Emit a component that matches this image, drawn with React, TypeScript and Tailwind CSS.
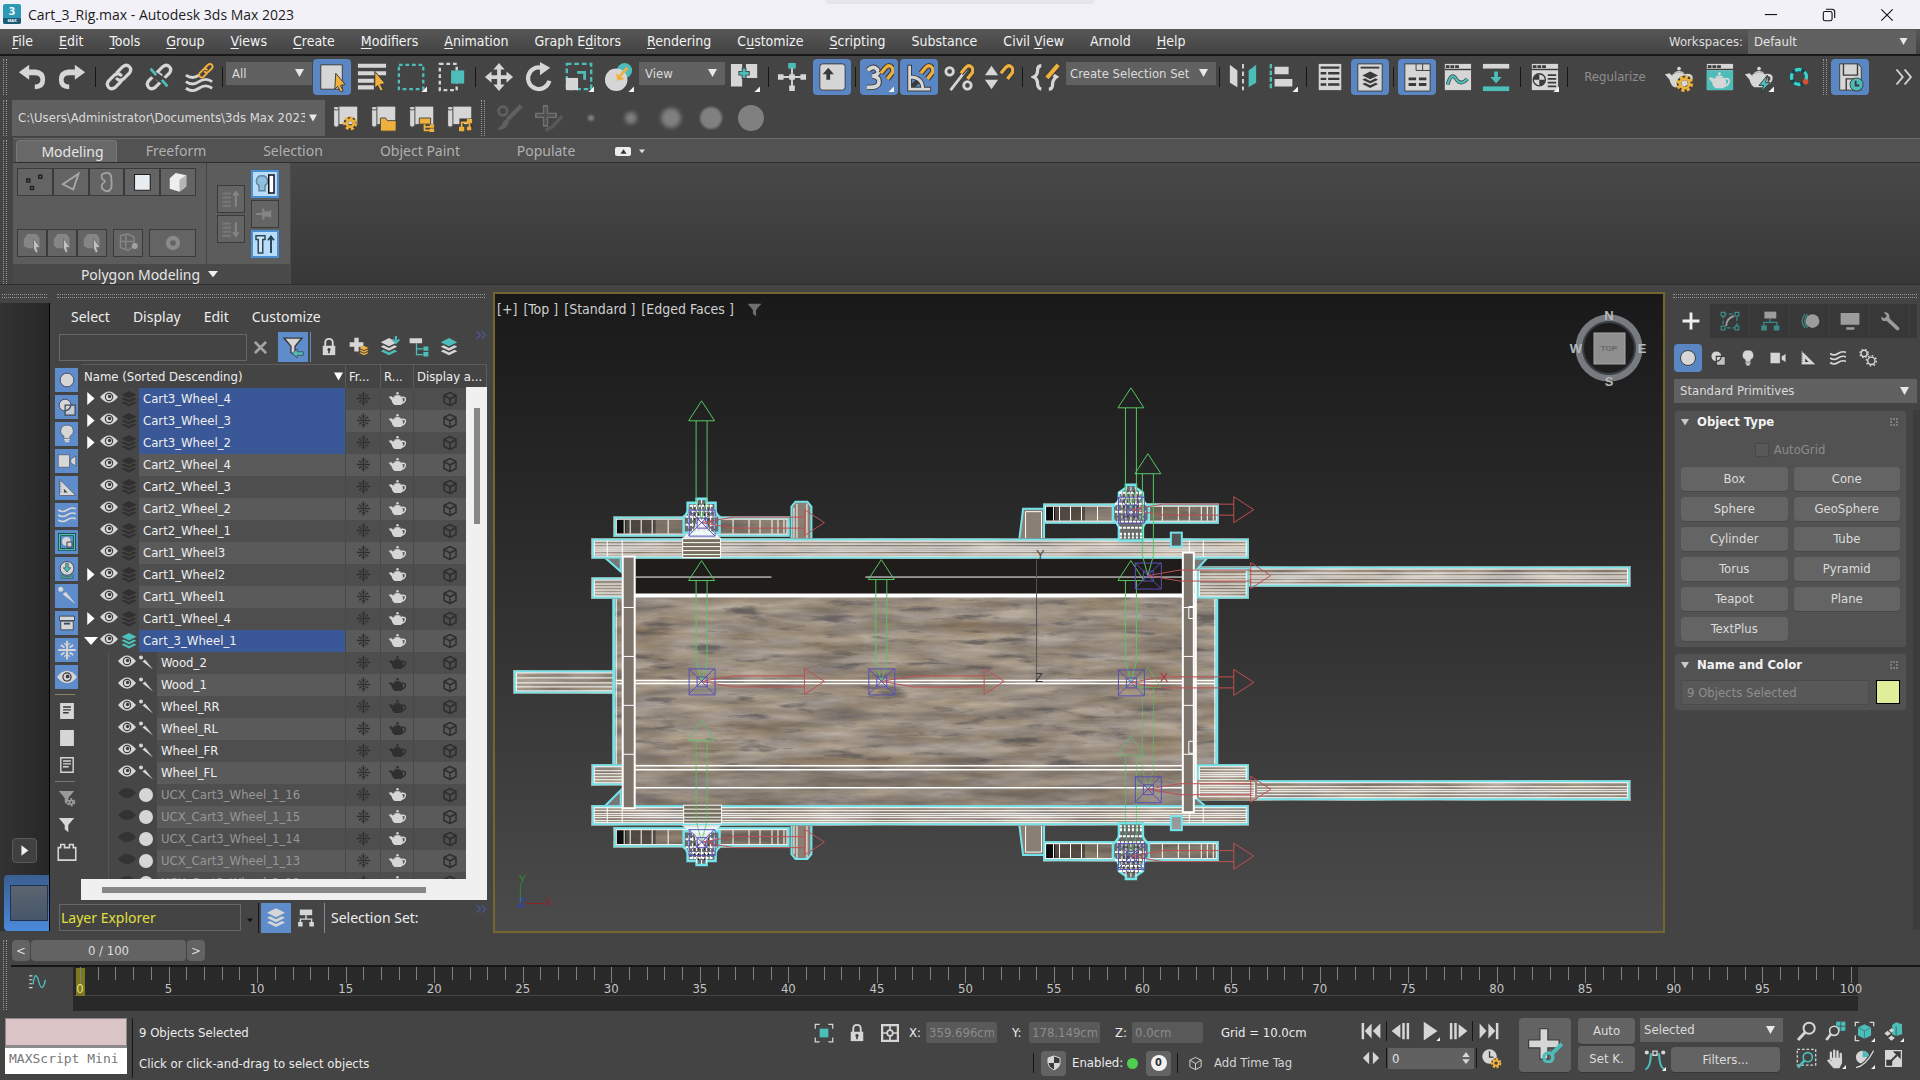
import React from "react";

const G = "#d6d6d6";
const T = "#4dbdb9";
const Y = "#efb13e";
const D = "#3a3a3a";
const UI = "font-['DejaVu_Sans_Condensed','DejaVu_Sans',sans-serif]";

type Kids = { children?: React.ReactNode };

function Svg({ s = 32, className = "", children }: Kids & { s?: number; className?: string }) {
  return (
    <svg width={s} height={s} viewBox="0 0 32 32" fill="none" className={"shrink-0 " + className} aria-hidden="true">
      {children}
    </svg>
  );
}

/* ---------- shared glyphs, all drawn on a 32 unit grid ---------- */

const Corner = () => <path d="M32 26v6h-6z" fill="#f2f2f2" />;

const Teapot = ({ c = G }: { c?: string }) => (
  <g>
    <path d="M9 13q7-3 14 0q5 7-1 14H11q-4-2-5-8L1 13l5-1l3 3z" fill={c} />
    <path d="M10 11.500q6-4 12 0z" fill={c} />
    <circle cx="16" cy="7" r="2" fill={c} />
    <path d="M23 14q8-1 6 5q-2 5-7 5" stroke={c} strokeWidth="2.500" />
  </g>
);

const Gear = ({ x, y, r = 6, c = Y }: { x: number; y: number; r?: number; c?: string }) => (
  <g>
    <circle cx={x} cy={y} r={r} stroke={D} strokeWidth="5" />
    <circle cx={x} cy={y} r={r + 1.500} stroke={c} strokeWidth="3" strokeDasharray="3.500 2.400" />
    <circle cx={x} cy={y} r={r - 1} stroke={c} strokeWidth="3" />
  </g>
);

const Magnet = () => (
  <g>
    <path d="M18 12l5-6q4-4 7 0q2 4-1 7l-4 5" stroke={D} strokeWidth="6" />
    <path d="M18 12l5-6q4-4 7 0q2 4-1 7l-4 5" stroke={Y} strokeWidth="3.500" />
  </g>
);

const Layers = ({ a = G, b = G, c = G }: { a?: string; b?: string; c?: string }) => (
  <g>
    <path d="M4 22l12 6l12-6l-4-2l-8 4l-8-4z" fill={c} />
    <path d="M4 15.500l12 6l12-6l-4-2l-8 4l-8-4z" fill={b} />
    <path d="M4 9l12 6l12-6l-12-6z" fill={a} />
  </g>
);

const Eye = ({ closed = false }: { closed?: boolean }) =>
  closed ? (
    <path d="M0 16q16-18 32 0q-16 18-32 0z" fill="#333" />
  ) : (
    <g>
      <path d="M0 16q16-20 32 0q-16 20-32 0z" fill={G} />
      <circle cx="16" cy="16" r="7.500" fill={D} />
      <circle cx="16" cy="16" r="5.500" fill={G} />
      <circle cx="17" cy="15" r="3" fill={D} />
    </g>
  );

const Funnel = ({ c = G }: { c?: string }) => <path d="M3 5h26l-10 12v12l-6-5v-7z" fill={c} />;

const Scroll = () => (
  <g>
    <path d="M8 3h22v20H8z" fill={G} />
    <path d="M3 3h6v22q-3 3-6 0z" fill={G} stroke={D} />
    <path d="M3 6q3 2 6 0" stroke={D} />
  </g>
);

const Snow = ({ c = "#303030" }: { c?: string }) => (
  <g stroke={c} strokeWidth="3">
    <path d="M16 1v30M2 16h28M6 8l6 4M26 8l-6 4M6 24l6-4M26 24l-6-4" />
    <path d="M11 5l5 4l5-4M11 27l5-4l5 4" strokeWidth="2" />
  </g>
);

const Cube = ({ c = "#2e2e2e" }: { c?: string }) => (
  <path d="M16 3l12 6v14l-12 6l-12-6V9zM4 9l12 7l12-7M16 16v13" stroke={c} strokeWidth="3" strokeLinejoin="round" />
);

const Bulb = ({ k = D }: { k?: string }) => (
  <g>
    <path d="M16 2a9 9 0 0 1 5 17v4H11v-4A9 9 0 0 1 16 2z" fill={G} stroke={k} />
    <path d="M11.500 25h9M13 28h6" stroke={G} strokeWidth="2.500" />
  </g>
);

const Camera = ({ k = D }: { k?: string }) => (
  <g fill={G} stroke={k}>
    <path d="M2 6h18v20H2z" />
    <path d="M22 13l8-5v16l-8-5z" />
  </g>
);

const SetSquare = ({ k = D }: { k?: string }) => (
  <g>
    <path d="M4 2l26 26H4z" fill={G} stroke={k} />
    <path d="M11 17l6 6h-6z" fill={k} />
    <path d="M4 6h3M4 10h3M4 14h3M4 18h3M4 22h3" stroke={k} />
  </g>
);

const Waves = ({ w = 2.500 }: { w?: number }) => (
  <g stroke={G} strokeWidth={w}>
    <path d="M2 8q7 5 14 0t14-2M2 16q7 5 14 0t14-2M2 24q7 5 14 0t14-2" />
  </g>
);

const Shapes = ({ k = D }: { k?: string }) => (
  <g>
    <circle cx="13" cy="13" r="9.500" fill={G} stroke={k} strokeWidth="1.500" />
    <path d="M13 13h16v16H13z" fill={G} fillOpacity=".85" stroke={k} strokeWidth="2" />
    <path d="M22 13q-1 8-9 9" stroke={k} strokeWidth="2" />
  </g>
);

const Bone = () => (
  <g>
    <circle cx="6" cy="5" r="4" fill={G} />
    <path d="M9 13l5-4l16 20z" fill={G} />
  </g>
);

const Chain = ({ c = G }: { c?: string }) => (
  <g stroke={c} strokeWidth="3.500" strokeLinecap="round">
    <path d="M14 11l6-6q4-3 7 0t0 7l-6 6q-4 3-7 0" />
    <path d="M18 21l-6 6q-4 3-7 0t0-7l6-6q4-3 7 0" />
  </g>
);

const Lock = () => (
  <g>
    <path d="M10 15V9q0-6 6-6t6 6v6" stroke={G} strokeWidth="3" />
    <path d="M6 14h20v15H6z" fill={G} />
    <circle cx="16" cy="20" r="2.500" fill={D} />
    <path d="M16 20v6" stroke={D} strokeWidth="2.500" />
  </g>
);

const Win = () => (
  <g>
    <path d="M3 2h28v28H3z" fill={G} />
    <path d="M3 8h28" stroke={D} strokeWidth="1.500" />
    <path d="M4 5h14" stroke={D} strokeWidth="3" strokeDasharray="4 1" />
  </g>
);

/* ---------- small building blocks ---------- */

function Tool({ label, on = false, children }: Kids & { label: string; on?: boolean }) {
  return (
    <button aria-label={label} className="flex h-9 w-10 shrink-0 items-center justify-center">
      <span className={on ? "flex h-9 w-[38px] items-center justify-center rounded bg-[#5b86c4]" : "flex"}>
        <Svg s={30}>{children}</Svg>
      </span>
    </button>
  );
}

const Sep = () => (
  <div className="flex w-[7px] shrink-0 justify-center">
    <div className="h-5 w-px bg-[#161616]" />
  </div>
);

function Drop({ label, value, box, text = "text-[13px]" }: { label: string; value: string; box: string; text?: string }) {
  return (
    <div className={"relative shrink-0 " + box}>
      <select aria-label={label} className={"h-full w-full appearance-none overflow-hidden bg-[#616161] text-[#dcdcdc] outline-none " + text}>
        <option>{value}</option>
      </select>
      <svg width="9" height="8" viewBox="0 0 9 8" className="pointer-events-none absolute top-1/2 right-2 -translate-y-1/2" aria-hidden="true">
        <path d="M0 0h9L4.500 8z" fill="#e8e8e8" />
      </svg>
    </div>
  );
}

const GripV = ({ className = "" }: { className?: string }) => (
  <div className={"w-1 shrink-0 border-x border-dotted border-[#989898] " + className} />
);
const GripH = ({ className = "" }: { className?: string }) => (
  <div className={"h-1 shrink-0 border-y border-dotted border-[#989898] " + className} />
);

/* ---------- title and menu ---------- */

function TitleBar() {
  return (
    <header className="relative flex h-[29px] shrink-0 items-center bg-[#f3f1f8] font-['Open_Sans',sans-serif] text-[14px] text-[#1c1c1c]">
      <svg width="19" height="21" viewBox="0 0 19 21" className="mr-1.5 ml-[3px]" aria-hidden="true">
        <rect width="18" height="20" rx="2" fill="#2d9ab5" />
        <path d="M0 14h18v4q0 2-2 2H2q-2 0-2-2z" fill="#1b5a72" />
        <text x="9" y="11" textAnchor="middle" fontSize="11" fontWeight="bold" fontFamily="Open Sans, sans-serif" fill="#fff">3</text>
        <text x="9" y="18" textAnchor="middle" fontSize="4" fontWeight="bold" fontFamily="Open Sans, sans-serif" fill="#fff">MAX</text>
      </svg>
      <h1>Cart_3_Rig.max - Autodesk 3ds Max 2023</h1>
      <div className="absolute top-0 left-1/2 h-1 w-[270px] -translate-x-1/2 rounded-b bg-[#e6e4ec]" />
      <div className="mr-1 ml-auto flex">
        <button aria-label="Minimize" className="flex w-[58px] justify-center">
          <Svg s={14}><path d="M2 15h28" stroke="#111" strokeWidth="2.500" /></Svg>
        </button>
        <button aria-label="Restore" className="flex w-[58px] justify-center">
          <Svg s={14}>
            <rect x="3" y="8" width="20" height="21" rx="4" stroke="#111" strokeWidth="2.500" />
            <path d="M9 3h14q6 0 6 6v14" stroke="#111" strokeWidth="2.500" />
          </Svg>
        </button>
        <button aria-label="Close" className="flex w-[58px] justify-center">
          <Svg s={14}><path d="M3 3l26 26M29 3L3 29" stroke="#111" strokeWidth="2.500" /></Svg>
        </button>
      </div>
    </header>
  );
}

const MENUS: [string, string, string][] = [
  ["", "F", "ile"], ["", "E", "dit"], ["", "T", "ools"], ["", "G", "roup"], ["", "V", "iews"], ["", "C", "reate"],
  ["", "M", "odifiers"], ["", "A", "nimation"], ["Graph E", "d", "itors"], ["", "R", "endering"], ["C", "u", "stomize"],
  ["", "S", "cripting"], ["Substance", "", ""], ["Civil ", "V", "iew"], ["Arnold", "", ""], ["", "H", "elp"],
];

function MenuBar() {
  return (
    <nav className={"flex h-[27px] shrink-0 items-center border-b-2 border-[#191919] bg-gradient-to-b from-[#575757] to-[#434343] pr-1 pl-3 text-[14px] text-[#f2f2f2] " + UI}>
      <div className="flex gap-[26px]">
        {MENUS.map(([a, b, c]) => (
          <button key={a + b + c} className="whitespace-pre">
            {a}<span className="underline underline-offset-2">{b}</span>{c}
          </button>
        ))}
      </div>
      <label htmlFor="ws" className="mr-[5px] ml-auto text-[13px] text-[#dedede]">Workspaces:</label>
      <div className="relative h-6 w-[168px]">
        <select id="ws" className="h-full w-full appearance-none bg-[#616161] pl-1.5 text-[13px] text-[#e6e6e6]"><option>Default</option></select>
        <svg width="9" height="7" viewBox="0 0 9 8" className="pointer-events-none absolute top-2 right-2" aria-hidden="true"><path d="M0 0h9L4.500 8z" fill="#e8e8e8" /></svg>
      </div>
    </nav>
  );
}

/* ---------- toolbars ---------- */

function MainToolbar() {
  return (
    <div className={"flex h-[42px] shrink-0 items-center pl-[3px] " + UI}>
      <GripV className="mr-[5px] h-9" />
      <Tool label="Undo"><path d="M2 11l11-8v5h7q10 1 10 11t-11 10v-5q6 0 6-5t-6-5h-6v5z" fill={G} /></Tool>
      <Tool label="Redo"><path d="M30 11l-11-8v5h-7q-10 1-10 11t11 10v-5q-6 0-6-5t6-5h6v5z" fill={G} /></Tool>
      <Sep />
      <Tool label="Link"><Chain /></Tool>
      <Tool label="Unlink">
        <Chain />
        <path d="M6 10l20 14" stroke="#444" strokeWidth="7" />
        <path d="M7 7l6 7M19 19l6 7" stroke={T} strokeWidth="3" />
      </Tool>
      <Tool label="Bind to Space Warp">
        <path d="M2 14q7 5 14 0M2 21q7 5 14 0t14 0M2 28q7 5 14 0t14 0" stroke={G} strokeWidth="3" />
        <g transform="translate(14 0) scale(.58)"><Chain c={Y} /></g>
      </Tool>
      <Sep />
      <Drop label="Selection filter" value="All" box="h-[23px] w-[86px] self-start mt-[5px]" text="pl-1.5 text-[13px]" />
      <Tool label="Select Object" on>
        <path d="M4 3h23v26H4z" fill={G} stroke={D} />
        <path d="M20 12l10 12l-5 1l3 6l-3 1l-3-6l-3 3z" fill={Y} stroke={D} />
      </Tool>
      <Tool label="Select by Name">
        <path d="M1 4h30M1 12h30M1 20h17M1 27h17" stroke={G} strokeWidth="4.500" />
        <path d="M19 10l11 13l-5 1l3 6l-3 1l-3-6l-3 3z" fill={Y} stroke={D} />
      </Tool>
      <Tool label="Rectangular Region">
        <path d="M2 3h26v26H2z" stroke={T} strokeWidth="2.500" strokeDasharray="4 3" /><Corner />
      </Tool>
      <Tool label="Window Crossing">
        <path d="M3 2h18v28H3z" stroke={G} strokeWidth="2.500" strokeDasharray="4 3" />
        <path d="M15 9h14v14H15z" fill={T} />
      </Tool>
      <Sep />
      <Tool label="Move"><path d="M16 1l6 7h-4v6h6v-4l7 6l-7 6v-4h-6v6h4l-6 7l-6-7h4v-6H8v4l-7-6l7-6v4h6V8h-4z" fill={G} /></Tool>
      <Tool label="Rotate">
        <path d="M18 6a11.500 11.500 0 1 0 9 14" stroke={G} strokeWidth="4.500" />
        <path d="M17 0l11 6l-11 8z" fill={G} />
      </Tool>
      <Tool label="Scale">
        <path d="M3 2h26v27H3z" stroke={T} strokeWidth="2.500" strokeDasharray="5 3" />
        <path d="M2 17h13v13H2z" fill={G} /><path d="M14 11h8v8" stroke={T} strokeWidth="3" /><Corner />
      </Tool>
      <Tool label="Place">
        <circle cx="22" cy="9" r="8" fill={T} /><circle cx="13" cy="19" r="12" fill={G} />
        <path d="M25 6l-8 9" stroke={Y} strokeWidth="3" /><path d="M13 12l1 8l8-2z" fill={Y} /><Corner />
      </Tool>
      <Drop label="Reference coordinate system" value="View" box="h-[23px] w-[86px] self-start mt-[5px]" text="pl-1.5 text-[13px]" />
      <Tool label="Use Pivot Point Center">
        <path d="M1 2h12v24H1zM17 2h12v15H17z" fill={G} /><path d="M9 12h12M15 6v12" stroke={D} strokeWidth="5" /><path d="M10 12h10M15 7v10" stroke={T} strokeWidth="3" /><Corner />
      </Tool>
      <Sep />
      <Tool label="Select and Manipulate">
        <path d="M16 4v24M4 16h24" stroke={G} strokeWidth="2" />
        <path d="M1 13h6v6H1zM25 13h6v6h-6zM13 25h6v6h-6zM13 13h6v6h-6z" fill={G} /><path d="M12 1h8v6h-8z" fill={T} />
      </Tool>
      <Tool label="Keyboard Shortcut Override" on>
        <rect x="3" y="2" width="27" height="28" rx="3" fill={G} stroke={D} /><path d="M12 6l6 7h-4v6h-4v-6H6z" fill={D} />
      </Tool>
      <Sep />
      <Tool label="Snaps Toggle" on>
        <path d="M4 9q6-6 10-1t-5 7q8 1 7 7t-13 5" stroke={D} strokeWidth="6" />
        <path d="M4 9q6-6 10-1t-5 7q8 1 7 7t-13 5" stroke={G} strokeWidth="4" />
        <Magnet /><Corner />
      </Tool>
      <Tool label="Angle Snap" on>
        <path d="M6 3v26h23M6 16q14 0 14 13M15 20l-9 9" stroke={D} strokeWidth="5" />
        <path d="M6 4v25h22M6 16q14 0 14 13" stroke={G} strokeWidth="3" /><Magnet />
      </Tool>
      <Tool label="Percent Snap">
        <path d="M24 8L7 30" stroke={G} strokeWidth="3" /><circle cx="6" cy="10" r="4" stroke={G} strokeWidth="3" />
        <circle cx="25" cy="25" r="4" stroke={G} strokeWidth="3" /><Magnet />
      </Tool>
      <Tool label="Spinner Snap"><path d="M1 14l7-10l7 10zM1 19l7 10l7-10z" fill={G} /><Magnet /></Tool>
      <Sep />
      <Tool label="Edit Named Selection Sets">
        <path d="M11 4Q7 4 7 9t-4 7q4 2 4 7t4 6M19 29q4 0 4-5t4-8q-4-2-4-5" stroke={G} strokeWidth="3.500" />
        <path d="M17 17L29 3" stroke={D} strokeWidth="7" /><path d="M17 17L29 3" stroke={Y} strokeWidth="4.500" />
      </Tool>
      <Drop label="Named selection sets" value="Create Selection Set" box="h-[23px] w-[150px] self-start mt-[5px]" text="pl-1 text-[13px]" />
      <Sep />
      <Tool label="Mirror">
        <path d="M2 3l8 6v18l-8-5z" fill={G} /><path d="M30 3l-8 6v18l8-5z" fill={T} />
        <path d="M16 2v28" stroke={G} strokeWidth="2" strokeDasharray="5 3" />
      </Tool>
      <Tool label="Align">
        <path d="M3 2v28" stroke={T} strokeWidth="2.500" strokeDasharray="5 2" /><path d="M7 5h15v8H7zM7 18h19v8H7z" fill={G} /><Corner />
      </Tool>
      <Sep />
      <Tool label="Scene Explorer">
        <path d="M4 2h24v28H4z" fill={G} /><path d="M6 6h20M6 12h6M14 12h12M6 18h6M14 18h12M6 24h6M14 24h12" stroke={D} strokeWidth="2.500" />
      </Tool>
      <Tool label="Layer Explorer" on>
        <path d="M3 2h26v29H3z" fill={G} stroke={D} /><path d="M6 6h20" stroke={D} strokeWidth="2" />
        <g transform="translate(5 8) scale(.7)"><Layers a={D} b={D} c={D} /></g>
      </Tool>
      <Sep />
      <Tool label="Toggle Ribbon" on>
        <path d="M3 2h27v29H3z" fill={G} stroke={D} /><path d="M15 2v7h15M22 2v7" stroke={D} />
        <path d="M7 18h8M18 18h8M7 24h8M18 24h8" stroke={D} strokeWidth="3" />
      </Tool>
      <Tool label="Curve Editor">
        <Win /><path d="M6 24q4-14 9-6t12 0" stroke={D} strokeWidth="4" /><path d="M6 24q4-14 9-6t12 0" stroke={T} strokeWidth="2.500" />
      </Tool>
      <Tool label="Schematic View">
        <path d="M1 2h28v5H1z" fill={G} /><path d="M1 26h28v5H1z" fill={T} /><path d="M13 10h4v6h4l-6 7l-6-7h4z" fill={T} />
      </Tool>
      <Sep />
      <Tool label="Material Editor">
        <Win /><circle cx="11" cy="19" r="6.500" fill={G} stroke={D} strokeWidth="1.500" />
        <path d="M11 13v6h-6q0-6 6-6zM11 19h6q0 6-6 6z" fill={D} /><path d="M20 14h9M20 18h9M20 22h9M20 26h9" stroke={D} strokeWidth="2" /><Corner />
      </Tool>
      <Sep />
      <button className="w-[88px] text-[13px] text-[#8e8e8e]">Regularize</button>
      <Tool label="Render Setup"><Teapot /><Gear x={22} y={23} /></Tool>
      <Tool label="Rendered Frame Window">
        <Win /><path d="M3 9h28v21H3z" fill={T} /><g transform="translate(4 7) scale(.78)"><Teapot /></g>
      </Tool>
      <Tool label="Render Production"><Teapot /><path d="M25 14l-9 11h5l-3 7l10-10h-5z" fill={T} stroke={D} /><Corner /></Tool>
      <Tool label="Render in Cloud">
        <circle cx="16" cy="16" r="8" stroke="#16444a" strokeWidth="4" />
        <circle cx="16" cy="16" r="8" stroke="#39d0cf" strokeWidth="3.500" strokeDasharray="7 4" />
        <circle cx="23" cy="21" r="3" fill="#d8502c" />
      </Tool>
      <GripV className="mr-[3px] ml-1 h-9" />
      <Tool label="Autosave" on>
        <path d="M5 2h20l3 4v24H5z" fill={G} stroke={D} /><path d="M9 2v12h15V2M12 30V18h8v12" stroke={D} strokeWidth="1.500" />
        <circle cx="23" cy="24" r="7" fill={T} stroke={D} /><path d="M22 20v5h4" stroke={D} strokeWidth="2" />
      </Tool>
      <button aria-label="More tools" className="mr-1.5 ml-auto"><Svg s={20}><path d="M4 4l10 12L4 28M17 4l10 12l-10 12" stroke={G} strokeWidth="3" /></Svg></button>
    </div>
  );
}

const DOTS: [string, string][] = [
  ["Brush size 1", "size-1.5 blur-[1px]"], ["Brush size 2", "size-3 blur-[2px]"], ["Brush size 3", "size-5 blur-[2px]"],
  ["Brush size 4", "size-[22px] blur-[1px]"], ["Brush size 5", "size-[26px]"],
];

function ProjectToolbar() {
  return (
    <div className={"flex h-10 shrink-0 items-center pl-[3px] " + UI}>
      <GripV className="mr-[5px] h-9" />
      <div className="relative h-9 w-[313px] shrink-0">
        <select aria-label="Project folder" className="h-full w-full appearance-none bg-[#606060] pr-5 pl-1.5 text-[13px] text-[#dcdcdc]">
          <option>C:\Users\Administrator\Documents\3ds Max 2023</option>
        </select>
        <svg width="8" height="8" viewBox="0 0 9 8" className="pointer-events-none absolute top-3.5 right-2" aria-hidden="true"><path d="M0 0h9L4.500 8z" fill="#e8e8e8" /></svg>
      </div>
      <div className="flex">
        <button aria-label="Project setup" className="w-[38px] pl-1.5"><Svg s={28}><Scroll /><Gear x={22} y={22} r={5} /></Svg></button>
        <button aria-label="Project folder" className="w-[38px] pl-1.5"><Svg s={28}><Scroll /><path d="M13 16h6l2 3h10v12H13z" fill={Y} stroke={D} /></Svg></button>
        <button aria-label="Project tree" className="w-[38px] pl-1.5"><Svg s={28}><Scroll /><path d="M14 16h13v7H14z" fill={Y} stroke={D} /><path d="M20 23v7h7M20 26h7" stroke={Y} strokeWidth="2" /><path d="M26 23h5v4h-5zM26 28h5v4h-5z" fill={Y} /></Svg></button>
        <button aria-label="Project links" className="w-[38px] pl-1.5"><Svg s={28}><Scroll /><path d="M19 30V19h10v8" stroke={D} strokeWidth="5" /><path d="M19 30V21h9v7" stroke={Y} strokeWidth="2" /><path d="M16 26h6v5h-6zM25 17h6v5h-6zM25 26h5v4h-5z" fill={Y} /></Svg></button>
      </div>
      <GripV className="mr-1 ml-1 h-9" />
      <button aria-label="Paint settings" className="flex w-10 justify-center"><Svg s={28}>
        <circle cx="9" cy="8" r="5" stroke="#606060" strokeWidth="3" /><path d="M30 2L14 18" stroke="#606060" strokeWidth="5" /><path d="M14 17q-5 1-6 7l-6 5q10 2 14-8z" fill="#606060" />
      </Svg></button>
      <button aria-label="Add brush" className="flex w-10 justify-center"><Svg s={28}>
        <path d="M31 14L20 26l-8 4" stroke="#585858" strokeWidth="4" /><path d="M12 1v25M0 13h25" stroke="#707070" strokeWidth="6" /><path d="M12 3v21M2 13h21" stroke="#505050" strokeWidth="3" />
      </Svg></button>
      <div className="ml-0.5 flex">
        {DOTS.map(([l, c]) => (
          <button key={l} aria-label={l} className="flex h-9 w-10 items-center justify-center"><span className={"rounded-full bg-[#808080] " + c} /></button>
        ))}
      </div>
    </div>
  );
}

/* ---------- ribbon ---------- */

const RIB = "flex h-7 items-center justify-center border border-[#3a3a3a] bg-[#646464]";

function Ribbon() {
  const soft = "#858585";
  return (
    <section className="flex h-[147px] shrink-0 border-b border-[#2e2e2e] pl-[3px] font-['Noto_Sans',sans-serif] text-[14px]">
      <GripV className="mr-1.5 mt-0.5 h-36" />
      <div className="min-w-0 flex-1">
        <div role="tablist" className="flex h-[25px] items-end border-t border-b border-t-[#6a6a6a] border-b-[#2e2e2e] bg-[#525252] pl-[3px] text-[#b0b0b0]">
          <button role="tab" className="h-[22px] w-[101px] rounded-t-sm border border-b-0 border-[#777] bg-[#686868] pl-3 text-center leading-5 text-[#e6e6e6]">Modeling</button>
          <button role="tab" className="w-[118px] leading-[22px]">Freeform</button>
          <button role="tab" className="w-[116px] leading-[22px]">Selection</button>
          <button role="tab" className="w-[138px] leading-[22px]">Object Paint</button>
          <button role="tab" className="w-[114px] leading-[22px]">Populate</button>
          <button aria-label="Minimize ribbon" className="ml-3 flex h-[22px] items-center gap-2">
            <span className="flex h-[9px] w-4 items-center justify-center rounded-xs bg-[#ececec]"><Svg s={7}><path d="M2 26h28L16 6z" fill="#333" /></Svg></span>
            <Svg s={6}><path d="M0 8h32L16 28z" fill="#e0e0e0" /></Svg>
          </button>
        </div>
        <div className="flex h-[121px] bg-gradient-to-b from-[#484848] to-[#383838]">
          <div className="flex w-[278px] flex-col border-r border-[#4c4c4c] bg-[#5c5c5c]">
            <div className="flex flex-1">
              <div className="flex w-[194px] flex-col justify-between border-r border-[#444] pt-[5px] pr-[10px] pb-[7px] pl-1">
                <div className="grid grid-cols-5">
                  <button aria-label="Vertex" className={RIB}><Svg s={24}><path d="M5 12h4v4H5zM21 7h4v4h-4zM10 22h4v4h-4z" stroke="#222" strokeWidth="2" /></Svg></button>
                  <button aria-label="Edge" className={RIB}><Svg s={24}><path d="M5 19L26 5l-7 21z" stroke="#a8a8a8" strokeWidth="2.500" /></Svg></button>
                  <button aria-label="Border" className={RIB}><Svg s={24}><path d="M12 5q10-4 11 5t0 14q-4 8-12 1q-2-6 2-8t-2-5q-2-5 1-7z" stroke="#a0a0a0" strokeWidth="2.500" /></Svg></button>
                  <button aria-label="Polygon" className={RIB}><Svg s={24}><path d="M6 6h21v21H6z" fill="#e9edf0" stroke="#222" strokeWidth="1.500" /></Svg></button>
                  <button aria-label="Element" className={RIB}><Svg s={24}><path d="M5 11l8-7l14 3v15l-9 7l-13-4z" fill="#eee" /><path d="M27 7l-9 6v16l9-7z" fill="#b5b5b5" /></Svg></button>
                </div>
                <div className="flex">
                  {["Preview off", "Preview subobject", "Preview multi"].map((l) => (
                    <button key={l} aria-label={l} className={RIB + " w-[30px]"}><Svg s={24}><path d="M5 11l5-7h12l4 5v14H10l-5-3z" fill={soft} /><path d="M18 10l9 12h-5l2 6l-3 1l-3-6z" fill="#c0c0c0" stroke="#666" /></Svg></button>
                  ))}
                  <button aria-label="Repeat last" className={RIB + " ml-1.5 w-[30px]"}><Svg s={24}><path d="M6 6l10-2l8 4v12l-8 6l-10-4zM6 14h18M13 5v20" stroke={soft} strokeWidth="2" /><circle cx="25" cy="20" r="4" fill="#a0a0a0" /></Svg></button>
                  <button aria-label="Soft selection" className={RIB + " ml-1.5 flex-1"}><Svg s={20}><circle cx="16" cy="16" r="8" stroke="#8a8a8a" strokeWidth="7" /></Svg></button>
                </div>
              </div>
              <div className="flex flex-1 items-center gap-1.5 pl-2.5">
                <div className="flex w-7 flex-col gap-0.5">
                  <button aria-label="Previous modifier" className={RIB}><Svg s={22}><path d="M4 8h12M4 14h12M4 20h12M4 26h12" stroke="#777" strokeWidth="3" /><path d="M23 27V8M19 11l4-5l4 5" stroke={soft} strokeWidth="3" /></Svg></button>
                  <button aria-label="Next modifier" className={RIB}><Svg s={22}><path d="M4 8h12M4 14h12M4 20h12M4 26h12" stroke="#777" strokeWidth="3" /><path d="M23 6v19M19 21l4 5l4-5" stroke={soft} strokeWidth="3" /></Svg></button>
                </div>
                <div className="flex w-7 flex-col gap-0.5">
                  <button aria-label="Show end result" className="flex h-7 items-center justify-center border-2 border-[#4a8fd0] bg-[#b9dcf8]"><Svg s={24}><path d="M12 5a7 7 0 0 1 4 13v7H8v-7a7 7 0 0 1 4-13z" fill="#8fc0e0" stroke="#64849a" strokeWidth="2" /><path d="M21 4h7v24h-7z" fill="#fff" stroke="#111" strokeWidth="2" /></Svg></button>
                  <button aria-label="Pin stack" className={RIB}><Svg s={22}><path d="M3 16h10" stroke={soft} strokeWidth="3" /><path d="M12 8h3v4h7l3-3v14l-3-3h-7v4h-3z" fill={soft} /></Svg></button>
                  <button aria-label="Toggle stack" className="flex h-7 items-center justify-center border-2 border-[#4a8fd0] bg-[#b9dcf8]"><Svg s={24}><path d="M4 5h12v5h-3v18H7V10H4z" fill="#cfe6f3" stroke="#2c4858" strokeWidth="2" /><path d="M24 28V8M20 11l4-5l4 5" stroke="#24404f" strokeWidth="2.500" /></Svg></button>
                </div>
              </div>
            </div>
            <button className="flex h-5 items-center justify-center gap-2 bg-[#494949] pr-5 pl-4 text-[#e6e6e6]">Polygon Modeling<Svg s={10}><path d="M0 6h32L16 26z" fill="#f0f0f0" /></Svg></button>
          </div>
        </div>
      </div>
    </section>
  );
}

/* ---------- layer explorer ---------- */

type Row = { n: string; lv: 0 | 1; exp?: "r" | "d"; sel?: boolean; geo?: boolean };
const ROWS: Row[] = [
  { n: "Cart3_Wheel_4", lv: 0, exp: "r", sel: true }, { n: "Cart3_Wheel_3", lv: 0, exp: "r", sel: true }, { n: "Cart3_Wheel_2", lv: 0, exp: "r", sel: true },
  { n: "Cart2_Wheel_4", lv: 0 }, { n: "Cart2_Wheel_3", lv: 0 }, { n: "Cart2_Wheel_2", lv: 0 }, { n: "Cart2_Wheel_1", lv: 0 },
  { n: "Cart1_Wheel3", lv: 0 }, { n: "Cart1_Wheel2", lv: 0, exp: "r" }, { n: "Cart1_Wheel1", lv: 0 }, { n: "Cart1_Wheel_4", lv: 0, exp: "r" },
  { n: "Cart_3_Wheel_1", lv: 0, exp: "d", sel: true },
  { n: "Wood_2", lv: 1 }, { n: "Wood_1", lv: 1 }, { n: "Wheel_RR", lv: 1 }, { n: "Wheel_RL", lv: 1 }, { n: "Wheel_FR", lv: 1 }, { n: "Wheel_FL", lv: 1 },
  { n: "UCX_Cart3_Wheel_1_16", lv: 1, geo: true }, { n: "UCX_Cart3_Wheel_1_15", lv: 1, geo: true }, { n: "UCX_Cart3_Wheel_1_14", lv: 1, geo: true },
  { n: "UCX_Cart3_Wheel_1_13", lv: 1, geo: true }, { n: "UCX_Cart3_Wheel_1_12", lv: 1, geo: true },
];

const LK = "#3d4a5c";
const FILTERS: [string, React.ReactNode][] = [
  ["Geometry", <circle cx="16" cy="16" r="11" fill={G} stroke={LK} strokeWidth="1.500" />],
  ["Shapes", <Shapes k={LK} />],
  ["Lights", <Bulb k={LK} />],
  ["Cameras", <Camera k={LK} />],
  ["Helpers", <SetSquare k={LK} />],
  ["Space warps", <Waves />],
  ["Groups", <g><path d="M4 4h24v24H4z" stroke="#1d4f4d" strokeWidth="5" /><path d="M4 4h24v24H4z" stroke={T} strokeWidth="2" /><circle cx="15" cy="15" r="7" fill={G} /><path d="M16 16h8v8h-8z" fill={G} stroke={D} strokeWidth="1.500" /></g>],
  ["XRefs", <g><circle cx="16" cy="15" r="11" fill={G} stroke={LK} strokeWidth="1.500" /><path d="M14 7h4v7h4l-6 7l-6-7h4z" fill={T} stroke={D} /><path d="M8 24v5h16v-5" stroke={D} strokeWidth="4" /><path d="M8 24v5h16v-5" stroke={T} strokeWidth="2" /></g>],
  ["Bones", <Bone />],
  ["Containers", <g fill={G} stroke={LK} strokeWidth="1.500"><path d="M4 5h24v7H4z" /><path d="M6 13h20v14H6z" /><path d="M11 17h10" strokeWidth="3" /></g>],
  ["Frozen", <g><Snow c={G} /></g>],
  ["Hidden", <Eye />],
];

const Doc = ({ lines = true, hollow = false }: { lines?: boolean; hollow?: boolean }) => (
  <g>
    <path d="M5 3h22v26H5z" fill={hollow ? "none" : G} stroke={G} strokeWidth="2.500" />
    {lines && <path d="M9 9h14M9 14h14M9 19h10" stroke={hollow ? G : D} strokeWidth="2.500" />}
  </g>
);

function ObjectTable() {
  return (
    <div className="flex min-h-0 flex-1 flex-col">
      <div className="relative min-h-0 flex-1 overflow-hidden">
        <table className={"w-full table-fixed border-collapse text-[13px] text-[#efefef] " + UI}>
          <colgroup><col /><col className="w-[35px]" /><col className="w-[33px]" /><col className="w-[73px]" /></colgroup>
          <thead>
            <tr className="h-[23px] border-t border-[#5c5c5c] bg-[#444] text-left">
              <th className="p-0 pl-[3px] font-normal">
                <div className="flex items-center justify-between pr-0.5">Name (Sorted Descending)<Svg s={9}><path d="M0 2h32L16 30z" fill="#fff" /></Svg></div>
              </th>
              <th className="border-l border-[#5c5c5c] p-0 pl-[3px] font-normal">Fr...</th>
              <th className="border-l border-[#5c5c5c] p-0 pl-[3px] font-normal">R...</th>
              <th className="border-x border-[#5c5c5c] p-0 pl-[3px] font-normal whitespace-nowrap">Display a...</th>
            </tr>
          </thead>
          <tbody>
            {ROWS.map((r, i) => {
              const bg = i % 2 ? "bg-[#5a5a5a]" : "bg-[#4e4e4e]";
              return (
                <tr key={r.n} className={"h-[22px] " + bg}>
                  <td className="p-0">
                    <div className="flex h-[22px]">
                      {r.lv === 0 ? (
                        <div className="flex w-[58px] items-center bg-[#464646]">
                          <span className="flex w-[19px] justify-center">
                            {r.exp === "r" && <Svg s={13}><path d="M8 0l18 16L8 32z" fill="#fff" /></Svg>}
                            {r.exp === "d" && <Svg s={14}><path d="M0 7h32L16 25z" fill="#fff" /></Svg>}
                          </span>
                          <Svg s={18} className="mb-[3px]"><Eye /></Svg>
                          <span className="flex w-[21px] justify-center"><Svg s={20}>{r.exp === "d" ? <Layers a={T} b={T} c={T} /> : <Layers a="#303030" b="#303030" c="#303030" />}</Svg></span>
                        </div>
                      ) : (
                        <div className="flex w-[76px] items-center bg-[#464646]">
                          <span className="mr-[9px] ml-[27px] h-full w-px bg-[#555]" />
                          <Svg s={18} className="mb-[3px]"><Eye closed={r.geo} /></Svg>
                          <span className="flex w-5 justify-center"><Svg s={16}>{r.geo ? <circle cx="16" cy="16" r="14" fill={G} /> : <Bone />}</Svg></span>
                        </div>
                      )}
                      <span className={"flex-1 pl-1 leading-[22px] " + (r.sel ? "bg-[#3a5797]" : "") + (r.geo ? " text-[#979797]" : "")}>{r.n}</span>
                    </div>
                  </td>
                  <td className="border-l border-[#484848] p-0"><Svg s={15} className="mx-auto"><Snow /></Svg></td>
                  <td className="border-l border-[#484848] p-0"><Svg s={19} className="mx-auto"><Teapot c={r.lv === 1 && !r.geo ? "#303030" : G} /></Svg></td>
                  <td className="border-l border-[#484848] p-0"><Svg s={16} className="ml-7"><Cube /></Svg></td>
                </tr>
              );
            })}
          </tbody>
        </table>
        <div className="absolute top-[23px] right-0 bottom-0 w-[21px] bg-[#f0f0f0]"><div className="mx-auto mt-[21px] h-[116px] w-1.5 bg-[#868686]" /></div>
      </div>
      <div className="flex h-[21px] items-center bg-[#f0f0f0] pr-[61px] pl-[21px]"><div className="h-1.5 flex-1 bg-[#868686]" /></div>
    </div>
  );
}

function Explorer() {
  const btn = "flex h-[30px] w-[30px] shrink-0 items-center justify-center";
  return (
    <aside className="flex w-[438px] shrink-0 flex-col pt-[9px] font-['Noto_Sans',sans-serif] text-[14px] text-[#ededed]">
      <GripH className="mr-[3px] ml-[7px]" />
      <div className="mt-1.5 flex h-6 items-center gap-[23px] pl-[21px]">
        <button>Select</button><button>Display</button><button>Edit</button><button>Customize</button>
      </div>
      <div className="flex h-9 items-center pt-0.5 pl-[9px]">
        <input aria-label="Find" className="h-[27px] w-[188px] border border-[#676767] bg-[#434343] px-1 outline-none" />
        <button aria-label="Clear" className="flex w-[27px] justify-center"><Svg s={15}><path d="M4 4l24 24M28 4L4 28" stroke="#a5a5a5" strokeWidth="6" /></Svg></button>
        <button aria-label="Advanced filter" className={btn + " ml-1 bg-[#5f8ccb]"}><Svg s={22}><path d="M3 3h26l-10 12v13l-6-4v-9z" fill={G} stroke={D} strokeWidth="2" /><path d="M15 25l7-6v4h9v5h-9v4z" fill={T} stroke={D} /></Svg></button>
        <div className="mr-[3px] ml-0.5 h-[30px] w-px bg-[#5f8ccb]" />
        <button aria-label="Lock" className={btn}><Svg s={20}><Lock /></Svg></button>
        <button aria-label="New layer" className={btn}><Svg s={20}><path d="M12 1v22M1 12h22" stroke={G} strokeWidth="7" /><g transform="translate(14 12) scale(.62)"><Layers a={Y} b={Y} c={Y} /></g></Svg></button>
        <button aria-label="Add to layer" className={btn}><Svg s={22}><Layers c={T} /><path d="M26 0v7M21 5l5 5l5-5" stroke={T} strokeWidth="3" /></Svg></button>
        <button aria-label="Hierarchy" className={btn}><Svg s={20}><path d="M1 2h20v8H1z" fill={G} /><path d="M12 10v18h10M12 19h10" stroke={T} strokeWidth="2" /><path d="M23 15h8v7h-8zM23 24h8v7h-8z" fill={T} /></Svg></button>
        <button aria-label="Active layer" className={btn}><Svg s={22}><Layers a={T} /></Svg></button>
        <span className="ml-auto flex self-start pr-0.5 text-[#4b5590]"><Svg s={10}><path d="M2 4l12 12L2 28M18 4l12 12l-12 12" stroke="currentColor" strokeWidth="5" /></Svg></span>
      </div>
      <div className="flex min-h-0 flex-1">
        <div className="flex w-[31px] shrink-0 flex-col items-start pt-1 pl-[5px]">
          <div className="flex flex-col gap-[3px]">
            {FILTERS.map(([l, g]) => (
              <button key={l} aria-label={l} className="flex h-6 w-[23px] items-center justify-center bg-[#5f8ccb]"><Svg s={20}>{g}</Svg></button>
            ))}
          </div>
          <div className="mt-[5px] h-px w-5 bg-[#8a836a]" />
          <div className="flex w-[23px] flex-col items-center gap-[9px] pt-[7px]">
            <button aria-label="All"><Svg s={18}><Doc /></Svg></button>
            <button aria-label="None"><Svg s={18}><Doc lines={false} /></Svg></button>
            <button aria-label="Invert"><Svg s={18}><Doc hollow /></Svg></button>
          </div>
          <div className="mt-[7px] h-px w-5 bg-[#777]" />
          <div className="flex w-[23px] flex-col items-center gap-2 pt-1.5">
            <button aria-label="Filter settings"><Svg s={19}><Funnel c="#9a9a9a" /><Gear x={24} y={24} r={4} c="#9a9a9a" /></Svg></button>
            <button aria-label="Filter"><Svg s={19}><Funnel /></Svg></button>
            <button aria-label="Custom filter"><Svg s={20}><path d="M2 29V9h4V4h6v5h8V4h6v5h4v20z" stroke={G} strokeWidth="2.500" /></Svg></button>
          </div>
        </div>
        <div className="mr-px flex min-w-0 flex-1"><ObjectTable /></div>
      </div>
      <div className="flex h-[37px] items-center pb-0.5 pl-[9px]">
        <input aria-label="Explorer name" defaultValue="Layer Explorer" className="h-[27px] w-[182px] border border-[#676767] bg-[#434343] px-px text-[#e0e03c] outline-none" />
        <span className="flex w-[17px] justify-center pt-1"><Svg s={6}><path d="M0 8h32L16 28z" fill="#111" /></Svg></span>
        <div className="h-[30px] w-px bg-[#161616]" />
        <button aria-label="Sort by layer" className={btn + " ml-0.5 bg-[#5f8ccb]"}><Svg s={24}><Layers /></Svg></button>
        <button aria-label="Sort by hierarchy" className={btn}><Svg s={18}><path d="M5 1h22v10H5z" fill={G} /><path d="M16 11v7M6 24v-6h20v6" stroke={G} strokeWidth="2.500" /><path d="M2 23h8v8H2zM22 23h8v8h-8z" fill={G} /></Svg></button>
        <div className="mx-[3px] h-[30px] w-px bg-[#8a8a8a]" />
        <span className="pl-[3px]">Selection Set:</span>
        <span className="mt-1 mr-0.5 ml-auto flex self-start text-[#4b5590]"><Svg s={10}><path d="M2 4l12 12L2 28M18 4l12 12l-12 12" stroke="currentColor" strokeWidth="5" /></Svg></span>
      </div>
    </aside>
  );
}

/* ---------- viewport drawing ---------- */

const CY = "#74e3ea";

/* Plank with its selection outline and the horizontal edges that run along it. */
function Plank({ x, y, w, h, n = 4, out = true }: { x: number; y: number; w: number; h: number; n?: number; out?: boolean }) {
  const step = (h - 6) / n;
  return (
    <g>
      <rect x={x} y={y} width={w} height={h} fill="#8f877c" filter="url(#wood)" />
      {out && <rect x={x + 1} y={y + 1} width={w - 2} height={h - 2} stroke={CY} strokeWidth="2" />}
      <rect x={x + 2.500} y={y + 2.500} width={w - 5} height={h - 5} stroke="#fff" />
      {Array.from({ length: n - 1 }, (_, i) => {
        const yy = Math.round(y + 3 + step * (i + 1)) + 0.500;
        return <path key={i} d={`M${x + 2} ${yy}h${w - 4}`} stroke="#fff" />;
      })}
    </g>
  );
}

function Wheel({ x, y }: { x: number; y: number }) {
  const cuts = [10, 16, 27, 38, 54, 72, 103, 119, 135, 146, 158, 164, 170];
  return (
    <g>
      <rect x={x} y={y} width="176" height="20" filter="url(#wood)" />
      <rect x={x} y={y} width="176" height="20" fill="#4a3f35" opacity=".35" />
      <rect x={x + 3} y={y + 3} width="9" height="14" fill="#0d0d0d" />
      <rect x={x + 12} y={y + 3} width="30" height="14" fill="#2a2722" opacity=".55" />
      <rect x={x + 1} y={y + 1} width="174" height="18" stroke={CY} strokeWidth="2" />
      <rect x={x + 2.500} y={y + 2.500} width="171" height="15" stroke="#fff" />
      {cuts.map((c) => <path key={c} d={`M${x + c + 0.500} ${y + 3}v14`} stroke="#fff" />)}
    </g>
  );
}

/* Hub of a wheel: a tapered cap, a wide ring and a foot that meets the beam. */
function Hub({ x, y, flip = false, full = false }: { x: number; y: number; flip?: boolean; full?: boolean }) {
  return (
    <g transform={`translate(${x} ${y}) scale(1 ${flip ? -1 : 1})`}>
      {full ? (
        <path d="M-5-26h10v3l7 5v7q1 3 6 7v13q-5 4-6 8v13h-24v-13q-1-4-6-8V-4q5-4 6-7v-7l7-5z" fill="#676b6a" stroke={CY} strokeWidth="2.500" />
      ) : (
        <path d="M-5-25h10v4h9v7q0 4 4 7v16h-36V-7q4-3 4-7v-7h9z" fill="#676b6a" stroke={CY} strokeWidth="2.500" />
      )}
      <path d="M-12-18h24M-13-13h26M-16-7h32M-16 1h32" stroke="#fff" strokeWidth="2" strokeDasharray="3 1" />
      <path d="M-9-19v28M-5-23v32M0-24v34M5-23v32M9-19v28M-13-11v20M13-11v20" stroke="#fff" strokeDasharray="4 2" />
      <path d="M-7-15v24M-3-20v29M3-20v29M7-15v24" stroke="#222" strokeDasharray="2 3" />
      {full ? (
        <path d="M-14 11h28M-12 17h24M-10 22v6M-6 22v6M-2 22v6M2 22v6M6 22v6M10 22v6" stroke="#fff" strokeWidth="2" strokeDasharray="3 1" />
      ) : (
        <path d="M0-10l8 16l12 9h-40l12-9z" fill="#fff" opacity=".85" />
      )}
    </g>
  );
}

function Up({ x, y, base }: { x: number; y: number; base: number }) {
  return <path d={`M${x} ${y}l13 20h-26zM${x - 5.500} ${y + 20}V${base - 20}L${x} ${base}l5.500-20V${y + 20}`} stroke="#56c765" />;
}

function Side({ x, y, tip }: { x: number; y: number; tip: number }) {
  return <path d={`M${tip} ${y}l-20-13v26zM${tip - 20} ${y - 5.500}H${x + 32}L${x} ${y}l32 5.500H${tip - 20}`} stroke="#bf4f53" />;
}

function Origin({ x, y }: { x: number; y: number }) {
  return (
    <g stroke="#5850b8">
      <path d={`M${x - 12.500} ${y - 12.500}h26v26h-26zM${x - 4.500} ${y - 4.500}h10v10h-10zM${x - 13} ${y - 13}l26 26M${x + 13} ${y - 13}l-26 26`} />
    </g>
  );
}

function Cart() {
  return (
    <svg viewBox="496 294 1168 638" preserveAspectRatio="xMidYMid meet" fill="none" className="absolute inset-0 h-full w-full" aria-label="Top view of the cart">
      <defs>
        <filter id="wood" x="0" y="0" width="1" height="1" colorInterpolationFilters="sRGB">
          <feTurbulence type="fractalNoise" baseFrequency="0.015 0.090" numOctaves="5" seed="11" />
          <feColorMatrix values="0.36 0.12 0 0 0.36  0.36 0.08 0 0 0.335  0.36 -0.02 0 0 0.335  0 0 0 0 1" />
        </filter>
        <filter id="streak" x="0" y="0" width="1" height="1" colorInterpolationFilters="sRGB">
          <feTurbulence type="fractalNoise" baseFrequency="0.022 0.130" numOctaves="6" seed="4" />
          <feColorMatrix values="0 0 0 0 0.30  0 0 0 0 0.29  0 0 0 0 0.31  4.5 0 0 0 -2.650" />
        </filter>
        <filter id="tan" x="0" y="0" width="1" height="1" colorInterpolationFilters="sRGB">
          <feTurbulence type="fractalNoise" baseFrequency="0.010 0.045" numOctaves="5" seed="23" />
          <feColorMatrix values="0 0 0 0 0.55  0 0 0 0 0.45  0 0 0 0 0.34  0 3 0 0 -1.600" />
        </filter>
      </defs>

      <Plank x={514} y={671} w={102} h={23} n={4} />
      <Plank x={1196} y={567} w={436} h={20} n={5} />
      <Plank x={1196} y={781} w={436} h={20} n={5} />

      <rect x="614" y="596" width="605" height="172" filter="url(#wood)" />
      <rect x="614" y="596" width="605" height="172" filter="url(#tan)" opacity=".45" />
      <rect x="614" y="596" width="605" height="172" filter="url(#streak)" opacity=".6" />
      <path d="M614 598v168M1218 598v168" stroke={CY} strokeWidth="3" />
      <path d="M616.500 598v168M1216 598v168" stroke="#fff" />
      <rect x="634" y="766" width="550" height="42" filter="url(#wood)" />
      <rect x="634" y="766" width="550" height="42" filter="url(#streak)" opacity=".3" />
      <rect x="634" y="766" width="550" height="42" fill="#4a4540" opacity=".15" />
      <rect x="634" y="558" width="550" height="38" fill="#1f1c1a" />
      <path d="M636 577.500h136M866 577.500h318" stroke="#fff" />
      <path d="M622 596h595" stroke="#fff" strokeWidth="4" />
      <path d="M616 681h600M616 684h600M634 766.500h550M634 770.500h550M634 788.500h550" stroke="#fff" strokeWidth="1.500" />

      <Wheel x={614} y={517} />
      <Wheel x={614} y={828} />
      <Wheel x={1044} y={504} />
      <Wheel x={1044} y={842} />

      <g fill="#8b7f74" stroke={CY} strokeWidth="2">
        <path d="M792 542v-35l4-5h12l4 5v35zM792 824v31l4 5h12l4-5v-31zM1024 509h21v32h-25zM1024 856h21v-32h-25z" />
      </g>
      <path d="M794.500 508v33M797.500 504v37M807.500 504v37M794.500 825v30M797.500 825v34M807.500 825v34M1026.500 512h16v28M1026.500 512v28M1026.500 825v28h16v-28" stroke="#fff" />

      <Plank x={592} y={578} w={34} h={21} n={5} />
      <Plank x={592} y={765} w={34} h={21} n={5} />
      <Plank x={1198} y={568} w={52} h={31} n={8} />
      <Plank x={1198} y={765} w={52} h={20} n={6} />
      <Plank x={1198} y={781} w={60} h={19} n={6} out={false} />

      <path d="M605 558l16 14v-14zM605 807l16-16v16zM1196 572l12-13h-20zM1196 798l12 10h-20z" fill="#777" stroke={CY} strokeWidth="2" />
      <Plank x={592} y={539} w={658} h={20} n={6} />
      <Plank x={592} y={806} w={658} h={20} n={6} />
      <path d="M607.500 541v16M622.500 541v16M607.500 808v16M622.500 808v16M1190.500 541v16M1204.500 541v16M1190.500 808v16M1204.500 808v16" stroke="#fff" />

      <rect x="683" y="539" width="38" height="19" fill="#77705f" stroke="#fff" />
      <path d="M683 543h38M683 547h38M683 551h38M683 555h38" stroke="#fff" />
      <rect x="684" y="806" width="38" height="18" fill="#77705f" stroke="#fff" />
      <path d="M684 810h38M684 814h38M684 818h38M684 821h38" stroke="#fff" />

      <rect x="623" y="557" width="12" height="252" fill="#7d746b" stroke="#fff" strokeWidth="2" />
      <path d="M623 608h12M623 657h12M623 706h12M623 755h12" stroke="#fff" />
      <rect x="1184" y="553" width="11" height="260" fill="#7d746b" stroke="#fff" strokeWidth="2" />
      <path d="M1184 608h12M1184 657h12M1184 706h12M1184 755h12M1190 607h5v12h-5zM1190 742h5v12h-5z" stroke="#fff" />
      <path d="M1197 570v230" stroke="#fff" strokeWidth="2" />
      <rect x="1172" y="533" width="11" height="14" fill="#555" stroke={CY} strokeWidth="2" />
      <rect x="1172" y="817" width="11" height="14" fill="#999" stroke={CY} strokeWidth="2" />

      <Hub x={702} y={524} />
      <Hub x={702} y={841} flip />
      <Hub x={1132} y={511} full />
      <Hub x={1132} y={854} flip full />

      <path d="M1037.500 560v122" stroke="#555" />
      <Side x={702} y={523} tip={825} />
      <Side x={702} y={682} tip={825} />
      <Side x={702} y={843} tip={825} />
      <Side x={882} y={682} tip={1005} />
      <Side x={1132} y={510} tip={1255} />
      <Side x={1132} y={683} tip={1255} />
      <Side x={1132} y={857} tip={1255} />
      <Side x={1149} y={576} tip={1272} />
      <Side x={1149} y={790} tip={1272} />
      <Up x={702} y={401} base={520} />
      <Up x={702} y={561} base={682} />
      <g opacity=".75"><Up x={702} y={721} base={842} /></g>
      <Up x={882} y={560} base={682} />
      <Up x={1132} y={388} base={510} />
      <Up x={1149} y={454} base={576} />
      <Up x={1132} y={561} base={682} />
      <g opacity=".6"><Up x={1132} y={736} base={856} /><Up x={1149} y={668} base={790} /></g>
      <Origin x={702} y={523} />
      <Origin x={702} y={682} />
      <Origin x={702} y={843} />
      <Origin x={882} y={682} />
      <Origin x={1132} y={510} />
      <Origin x={1149} y={576} />
      <Origin x={1132} y={683} />
      <Origin x={1149} y={790} />
      <Origin x={1132} y={857} />

      <g fontFamily="Liberation Sans, sans-serif" fontSize="13">
        <text x="1037" y="559" fill="#4a4a4a">Y</text>
        <text x="1036" y="683" fill="#3a3a3a">Z</text>
        <text x="1161" y="683" fill="#a8383b">X</text>
        <text x="519" y="884" fill="#2d8a35" fontSize="11">Y</text>
        <text x="545" y="907" fill="#8e2226" fontSize="11">X</text>
        <text x="518" y="908" fill="#3a3fb0" fontSize="12" fontWeight="bold">Z</text>
      </g>
      <path d="M520.500 884v20" stroke="#2d8a35" />
      <path d="M527 904.500h18" stroke="#8e2226" />
    </svg>
  );
}

function Viewport() {
  return (
    <main className="relative min-w-0 flex-1 self-stretch border-2 border-[#75662f] bg-gradient-to-b from-[#191919] to-[#4b4b4b]">
      <Cart />
      <div className={"relative flex items-center gap-1.5 pt-[5px] pl-0.5 text-[14px] text-[#cfcfcf] " + UI}>
        <button>[+]</button><button>[Top ]</button><button>[Standard ]</button><button>[Edged Faces ]</button>
        <Svg s={17} className="ml-1.5"><Funnel c="#6e6e6e" /></Svg>
      </div>
      <svg width="80" height="84" viewBox="0 0 80 84" fill="none" className="absolute top-[11px] right-[14px]" aria-label="View cube">
        <circle cx="40" cy="43" r="30" stroke="#777b80" strokeWidth="7" />
        <circle cx="40" cy="43" r="26" stroke="#3c4046" strokeWidth="2" />
        <rect x="25" y="28" width="31" height="31" fill="#8f8f8f" stroke="#a5a5a5" />
        <g fontFamily="Liberation Sans, sans-serif" fontWeight="bold" textAnchor="middle">
          <text x="40" y="46" fontSize="8" fill="#666">TOP</text>
          <g fontSize="13" fill="#b4b8bc"><text x="40" y="15">N</text><text x="40" y="81">S</text><text x="7" y="48">W</text><text x="73" y="48">E</text></g>
        </g>
      </svg>
    </main>
  );
}

/* ---------- command panel ---------- */

const M = "#9c9c9c";
const TM = "#3a8a87";
const TABS: [string, React.ReactNode][] = [
  ["Modify", <g stroke={TM} strokeWidth="2"><path d="M5 5h22v22H5z" strokeDasharray="6 3" /><path d="M2 2h6v6H2zM24 2h6v6h-6zM2 24h6v6H2zM24 24h6v6h-6z" fill="#383838" /><path d="M10 24q0-12 12-16" stroke={M} strokeWidth="3" /></g>],
  ["Hierarchy", <g><path d="M7 1h19v11H7z" fill={M} /><path d="M16 12v6M6 24v-6h21v6" stroke={TM} strokeWidth="2" /><path d="M2 23h9v8H2zM22 23h9v8h-9z" fill={TM} /></g>],
  ["Motion", <g><path d="M8 5q-9 11 0 22M12 5q-9 11 0 22" stroke={TM} strokeWidth="2" /><circle cx="20" cy="16" r="11" fill={M} /></g>],
  ["Display", <path d="M1 3h30v19H1zM10 26h13v4H10z" fill={M} />],
  ["Utilities", <g><path d="M12 13l16 15" stroke={M} strokeWidth="6" strokeLinecap="round" /><path d="M6 2q8-1 9 6t-6 8t-7-7l5 3l4-4z" fill={M} /></g>],
];
const CATS: [string, React.ReactNode][] = [
  ["Shapes", <Shapes />], ["Lights", <Bulb />], ["Cameras", <Camera />], ["Helpers", <SetSquare />], ["Space Warps", <Waves w={3} />],
  ["Systems", <g stroke={G}><circle cx="9" cy="8" r="5.500" strokeWidth="2.500" /><circle cx="22" cy="21" r="6.500" strokeWidth="2.500" /><circle cx="9" cy="8" r="7.500" strokeWidth="2" strokeDasharray="3 3" /><circle cx="22" cy="21" r="9" strokeWidth="2.500" strokeDasharray="3 4" /></g>],
];

function Rollout({ title, children }: Kids & { title: string }) {
  return (
    <section className="mb-[5px] rounded-sm border border-[#464646] bg-[#525252] px-1.5 pb-[5px]">
      <h2 className="flex h-[22px] items-center text-[13px] font-bold text-[#f2f2f2]">
        <Svg s={8} className="mr-2"><path d="M0 4h32L16 30z" fill="#c8c8c8" /></Svg>{title}
        <span className="mr-0.5 ml-auto h-2 w-2 border-2 border-dotted border-[#7c7c7c]" />
      </h2>
      {children}
    </section>
  );
}

const PRIMS = ["Box", "Cone", "Sphere", "GeoSphere", "Cylinder", "Tube", "Torus", "Pyramid", "Teapot", "Plane", "TextPlus"];

function CommandPanel() {
  return (
    <aside className={"w-[255px] shrink-0 pl-[7px] text-[13px] text-[#dcdcdc] " + UI}>
      <GripH className="mt-[9px] mr-[3px] ml-px" />
      <div className="mt-[6px] mr-[3px] flex h-[34px] bg-[#383838]">
        <button aria-label="Create" className="flex w-[38px] items-center justify-center bg-[#444]"><Svg s={18}><path d="M16 1v30M1 16h30" stroke="#f0f0f0" strokeWidth="5" /></Svg></button>
        {TABS.map(([l, g]) => <button key={l} aria-label={l} className="flex w-10 items-center justify-center border-r border-[#404040]"><Svg s={20}>{g}</Svg></button>)}
      </div>
      <div className="mt-1.5 flex h-7 items-center pl-0.5">
        <button aria-label="Geometry" className="mr-px flex h-7 w-7 items-center justify-center rounded bg-[#5b86c4]"><Svg s={20}><circle cx="16" cy="16" r="12" fill={G} stroke={D} strokeWidth="1.500" /></Svg></button>
        {CATS.map(([l, g]) => <button key={l} aria-label={l} className="flex h-7 w-[30px] items-center justify-center"><Svg s={18}>{g}</Svg></button>)}
      </div>
      <div className="mt-[7px] mr-[3px] pl-0.5"><Drop label="Category" value="Standard Primitives" box="h-6" text="pl-1.5 text-[13px]" /></div>
      <div className="mt-[7px] flex">
        <div className="w-[235px] pl-0.5">
          <Rollout title="Object Type">
            <label className="flex h-[34px] items-center justify-center gap-[5px] pr-px text-[#8b8b8b]">
              <input type="checkbox" disabled className="size-3.5 appearance-none border border-[#484848] bg-[#585858]" />AutoGrid
            </label>
            <div className="mb-px grid grid-cols-2 gap-x-1.5 gap-y-1.5">
              {PRIMS.map((p) => <button key={p} className="h-6 rounded-sm bg-[#646464] shadow-[0_1px_0_#484848]">{p}</button>)}
            </div>
          </Rollout>
          <Rollout title="Name and Color">
            <div className="mt-1 flex gap-[7px]">
              <input aria-label="Object name" disabled value="9 Objects Selected" readOnly className="h-[25px] min-w-0 flex-1 border border-[#4b4b4b] bg-[#585858] px-[5px] text-[#8e8e8e]" />
              <button aria-label="Object color" className="h-6 w-6 border border-black bg-[#dfee98]" />
            </div>
          </Rollout>
        </div>
        <div className="ml-1.5 h-[520px] w-[7px] bg-[#3c3c3c]" />
      </div>
    </aside>
  );
}

/* ---------- time line ---------- */

const FIVES = Array.from({ length: 20 }, (_, i) => i * 5);
const SMALL = "rounded bg-[#636363] text-[#dcdcdc]";

function Timeline() {
  return (
    <section className={"flex h-[75px] shrink-0 pt-[3px] pl-[3px] text-[13px] text-[#c4c4c4] " + UI}>
      <GripV className="mr-1 h-[70px]" />
      <div className="min-w-0 flex-1">
        <div className="flex h-[27px] gap-px border-b-2 border-[#161616] pl-px">
          <button className={SMALL + " h-[21px] w-[18px]"}>&lt;</button>
          <button className={SMALL + " h-[21px] w-[155px]"}>0 / 100</button>
          <button className={SMALL + " h-[21px] w-[18px]"}>&gt;</button>
        </div>
        <div className="flex h-11 pr-[62px]">
          <button aria-label="Open mini curve editor" className="flex w-[62px] items-start justify-center pt-1.5 pr-2.5">
            <Svg s={18}><path d="M2 5h6M2 12h6M2 19h6M2 26h6" stroke={G} strokeWidth="2" /><path d="M9 20q4-28 10-5t12-3" stroke={T} strokeWidth="2.500" /></Svg>
          </button>
          <div className="relative flex flex-1 bg-[#292929] pr-[7px] pl-[7px]">
            <div className="absolute inset-x-0 top-[28px] h-px bg-[#454545]" />
            <div className="absolute top-px left-[3px] h-7 w-[9px] bg-[#7b781f]" />
            {FIVES.map((f) => (
              <div key={f} className="relative flex flex-1">
                {[0, 1, 2, 3, 4].map((k) => <span key={k} className={"flex-1 border-l border-[#808080] " + (k ? "h-[13px]" : "h-[16px]")} />)}
                <span className={"absolute top-3 left-0 w-10 -translate-x-1/2 text-center leading-5 " + (f ? "" : "text-[#e6e27a]")}>{f}</span>
              </div>
            ))}
            <div className="relative w-0">
              <span className="block h-4 w-px bg-[#808080]" />
              <span className="absolute top-3 left-0 w-10 -translate-x-1/2 text-center leading-5">100</span>
            </div>
          </div>
        </div>
      </div>
    </section>
  );
}

/* ---------- status bar ---------- */

function Coord({ axis, value, gap }: { axis: string; value: string; gap: string }) {
  return (
    <label className={"flex items-center " + gap}>
      <span className="w-[17px]">{axis}:</span>
      <input disabled value={value} readOnly className="h-[21px] w-[71px] rounded-xs bg-[#595959] px-[3px] text-[#8b8b8b]" />
    </label>
  );
}

function PlayIcon({ label, w, d, corner = false }: { label: string; w: string; d: string; corner?: boolean }) {
  return (
    <button aria-label={label} className={"flex items-center justify-center " + w}>
      <Svg s={20}><path d={d} fill={G} />{corner && <Corner />}</Svg>
    </button>
  );
}

const NAV: [string, React.ReactNode][] = [
  ["Zoom", <g stroke={G}><circle cx="20" cy="11" r="8.500" strokeWidth="3" /><path d="M14 17L3 29" strokeWidth="4.500" /></g>],
  ["Zoom All", <g><path d="M17 1h14v14H17z" fill={T} /><path d="M24 1v14M17 8h14" stroke={D} /><circle cx="14" cy="15" r="7" fill="#444" stroke={G} strokeWidth="2.500" /><path d="M9 20l-7 9" stroke={G} strokeWidth="4" /></g>],
  ["Zoom Extents", <g><path d="M2 8V2h6M24 2h6v6M2 22v8h6" stroke={G} strokeWidth="2" /><path d="M16 5l10 5v12l-10 5l-10-5V10z" fill={T} /><path d="M6 10l10 5l10-5M16 15v12" stroke="#2b6f6d" /><Corner /></g>],
  ["Zoom Extents All", <g><path d="M20 2l9 3v15l-9 3l-6-3V6z" fill={T} /><path d="M20 8v15" stroke={D} /><path d="M2 19l5-4l5 4l-5 4zM8 26l5-4l5 4l-5 4zM9 14l4-3l4 3l-4 4z" fill={G} /><Corner /></g>],
  ["Region", <g><path d="M2 2h28v24H2z" stroke={G} strokeWidth="2" strokeDasharray="4 3" /><circle cx="18" cy="14" r="7" fill="#444" stroke={T} strokeWidth="2.500" /><path d="M13 19L3 30" stroke={T} strokeWidth="4" /></g>],
  ["Pan", <g><path d="M9 17V7M14 16V4M19 16V5M24 18V9" stroke={G} strokeWidth="3.500" strokeLinecap="round" /><path d="M7 15h19v8l-4 8H13l-10-12l3-2l5 3z" fill={G} /><Corner /></g>],
  ["Orbit", <g><circle cx="13" cy="14" r="10" fill={G} /><path d="M13 4a10 10 0 0 1 10 10H13z" fill={T} /><path d="M3 30Q18 27 30 4" stroke={D} strokeWidth="5" /><path d="M3 30Q18 27 30 4" stroke={G} strokeWidth="2" /><Corner /></g>],
  ["Maximize Viewport", <g><path d="M3 3h26v26H3z" fill={G} /><path d="M15 5h12v12zM5 18h9v9H5z" fill={D} /><path d="M12 20l9-9" stroke={D} strokeWidth="3" /></g>],
];

const BTN = "rounded bg-[#636363] text-[#dcdcdc] shadow-[0_1px_0_#383838]";

function StatusBar() {
  return (
    <footer className={"flex h-[68px] shrink-0 pt-1.5 pr-3 pl-[5px] text-[13px] text-[#ececec] " + UI}>
      <div className="w-[122px] shrink-0">
        <div className="h-[28px] border border-[#8a8a8a] bg-[#dac4c6]" />
        <input aria-label="MAXScript listener" defaultValue="MAXScript Mini" className="h-[28px] w-full border-t-2 border-[#8a8a8a] bg-white px-1 pb-1.5 font-['DejaVu_Sans_Mono',monospace] text-[13px] text-[#777] outline-none" />
      </div>
      <div className="mr-[6px] ml-[5px] h-[60px] w-px bg-[#161616]" />
      <div className="flex flex-col pt-[5px]">
        <p className="h-[31px] leading-5">9 Objects Selected</p>
        <p className="leading-5">Click or click-and-drag to select objects</p>
      </div>
      <div className="mr-[44px] ml-auto w-[503px] shrink-0">
        <div className="flex h-[29px] items-center">
          <button aria-label="Isolate selection" className="flex w-8 justify-center"><Svg s={20}><path d="M2 9V2h7M23 2h7v7M2 23v7h7M23 30h7v-7" stroke={G} strokeWidth="2" /><path d="M9 9h14v14H9z" fill={T} /></Svg></button>
          <button aria-label="Selection lock" className="flex w-[34px] justify-center"><Svg s={20}><Lock /></Svg></button>
          <button aria-label="Absolute mode" className="flex w-8 justify-center"><Svg s={18}><path d="M2 2h28v28H2z" stroke={G} strokeWidth="4" /><circle cx="16" cy="16" r="5" stroke={G} strokeWidth="3" /><path d="M16 3v8M16 21v8M3 16h8M21 16h8" stroke={G} strokeWidth="3" /></Svg></button>
          <Coord axis="X" value="359.696cm" gap="ml-[3px]" />
          <Coord axis="Y" value="178.149cm" gap="ml-[15px]" />
          <Coord axis="Z" value="0.0cm" gap="ml-[15px]" />
          <span className="ml-[18px] whitespace-nowrap">Grid = 10.0cm</span>
        </div>
        <div className="flex h-8 items-center pl-[225px]">
          <div className="mr-[7px] h-5 w-px shrink-0 bg-[#161616]" />
          <button aria-label="Security" className="flex size-[25px] shrink-0 items-center justify-center rounded bg-[#636363]"><Svg s={16}><path d="M16 2l12 4v10q0 9-12 14Q4 25 4 16V6z" fill={D} stroke={G} strokeWidth="2" /><path d="M16 2v14H4V6zM16 16h12q0 9-12 14z" fill={G} /></Svg></button>
          <span className="ml-1.5 w-[55px] shrink-0">Enabled:</span>
          <span className="size-[11px] shrink-0 rounded-full bg-[#4fcd50]" />
          <button aria-label="Messages" className="ml-2 flex size-[25px] shrink-0 items-center justify-center rounded bg-[#636363]"><span className="flex size-4 items-center justify-center rounded-full bg-[#f2f2f2] text-[11px] font-bold text-[#333]">0</span></button>
          <div className="ml-1.5 h-5 w-px shrink-0 bg-[#161616]" />
          <Svg s={15} className="mr-[11px] ml-2.5"><path d="M16 3l12 6v14l-12 6l-12-6V9zM4 9l12 7l12-7M16 16v13" stroke={G} strokeWidth="2" strokeLinejoin="round" /></Svg>
          <button className="whitespace-nowrap text-[#d4d4d4]">Add Time Tag</button>
        </div>
      </div>
      <div className="mr-[14px] w-[150px] shrink-0 pt-px">
        <div className="flex h-6 items-center">
          <PlayIcon label="Go to start" w="w-[31px]" d="M1 3h4v26H1zM17 4v24L6 16zM31 4v24L19 16z" />
          <div className="h-5 w-px bg-[#161616]" />
          <PlayIcon label="Previous frame" w="w-7" d="M15 5v22L1 16zM18 3h4v26h-4zM25 3h4v26h-4z" />
          <PlayIcon label="Play" w="w-[29px]" d="M6 1v30l22-15z" corner />
          <PlayIcon label="Next frame" w="w-7" d="M17 5v22l14-11zM3 3h4v26H3zM10 3h4v26h-4z" />
          <div className="h-5 w-px bg-[#161616]" />
          <PlayIcon label="Go to end" w="w-8" d="M31 3h-4v26h4zM15 4v24l11-12zM1 4v24l11-12z" />
        </div>
        <div className="mt-[3px] flex h-6 items-center">
          <PlayIcon label="Key mode" w="w-[31px]" d="M13 6v20L3 16zM19 6v20l10-10z" />
          <div className="mr-px h-5 w-px bg-[#161616]" />
          <div className="relative h-[21px] w-[86px]">
            <input aria-label="Current frame" defaultValue="0" className="h-full w-full bg-[#616161] px-1 text-[#e4e4e4] outline-none" />
            <Svg s={12} className="absolute top-1 right-0.5"><path d="M6 13L16 0l10 13zM6 19l10 13l10-13z" fill={G} /></Svg>
          </div>
          <div className="ml-0.5 h-5 w-px bg-[#161616]" />
          <button aria-label="Time configuration" className="flex flex-1 justify-center"><Svg s={21}><circle cx="13" cy="13" r="11" fill={G} /><path d="M13 5v9h6" stroke={D} strokeWidth="2" /><Gear x={23} y={23} r={5} /></Svg></button>
        </div>
      </div>
      <button aria-label="Set keys" className={BTN + " mr-[7px] flex h-[54px] w-[52px] shrink-0 items-center justify-center"}>
        <Svg s={36}><path d="M15 1v28M1 15h28" stroke={D} strokeWidth="8" /><path d="M15 2v26M2 15h26" stroke={G} strokeWidth="6" /><path d="M31 15L21 25" stroke={T} strokeWidth="3.500" /><circle cx="19" cy="27" r="4" stroke={T} strokeWidth="3" /></Svg>
      </button>
      <div className="mr-[5px] flex w-[57px] shrink-0 flex-col gap-0.5">
        <button className={BTN + " h-[26px]"}>Auto</button>
        <button className={BTN + " h-[26px]"}>Set K.</button>
      </div>
      <div className="mr-[9px] w-[143px] shrink-0">
        <Drop label="Key set" value="Selected" box="h-6" text="pl-1 text-[13px]" />
        <div className="mt-[5px] flex items-center">
          <button aria-label="Tangents" className="flex w-[31px] justify-start pl-1"><Svg s={22}><path d="M2 30q8-4 8-24M30 30q-8-4-8-24" stroke={T} strokeWidth="3" /><path d="M13 3h6v6h-6z" stroke={G} strokeWidth="2" /><circle cx="4" cy="5" r="3" fill={G} /><circle cx="28" cy="5" r="3" fill={G} /><Corner /></Svg></button>
          <button className={BTN + " h-[25px] w-[109px]"}>Filters...</button>
        </div>
      </div>
      <div className="grid h-[54px] w-[116px] shrink-0 grid-cols-4">
        {NAV.map(([l, g]) => <button key={l} aria-label={l} className="flex items-center justify-center"><Svg s={21}>{g}</Svg></button>)}
      </div>
    </footer>
  );
}

export default function App() {
  return (
    <div className="flex h-screen flex-col overflow-hidden bg-[#444]">
      <TitleBar />
      <MenuBar />
      <MainToolbar />
      <ProjectToolbar />
      <Ribbon />
      <div className="flex min-h-0 flex-1">
        <div className="flex w-[50px] shrink-0 flex-col pt-[9px]">
          <GripH className="mr-[3px] ml-0.5" />
          <div className="mt-[5px] mb-1.5 flex flex-1 flex-col justify-end border-r border-black bg-gradient-to-r from-[#333] to-[#272727]">
            <button aria-label="Expand" className="mb-3 ml-3 flex size-[25px] items-center justify-center rounded border border-[#5a5a5a] bg-[#404040]"><Svg s={11}><path d="M7 1v30l20-15z" fill="#f0f0f0" /></Svg></button>
            <button aria-label="Viewport layout" className="ml-1 flex h-14 items-center justify-center rounded-l bg-gradient-to-b from-[#3a5f92] to-[#4a8adb] pl-1"><span className="h-9 w-[38px] border border-[#1f3450] bg-gradient-to-b from-[#5c6570] to-[#46566a]" /></button>
          </div>
        </div>
        <Explorer />
        <div className="flex min-w-0 flex-1 pt-[7px] pb-1 pl-[5px]"><Viewport /></div>
        <CommandPanel />
      </div>
      <Timeline />
      <StatusBar />
    </div>
  );
}
